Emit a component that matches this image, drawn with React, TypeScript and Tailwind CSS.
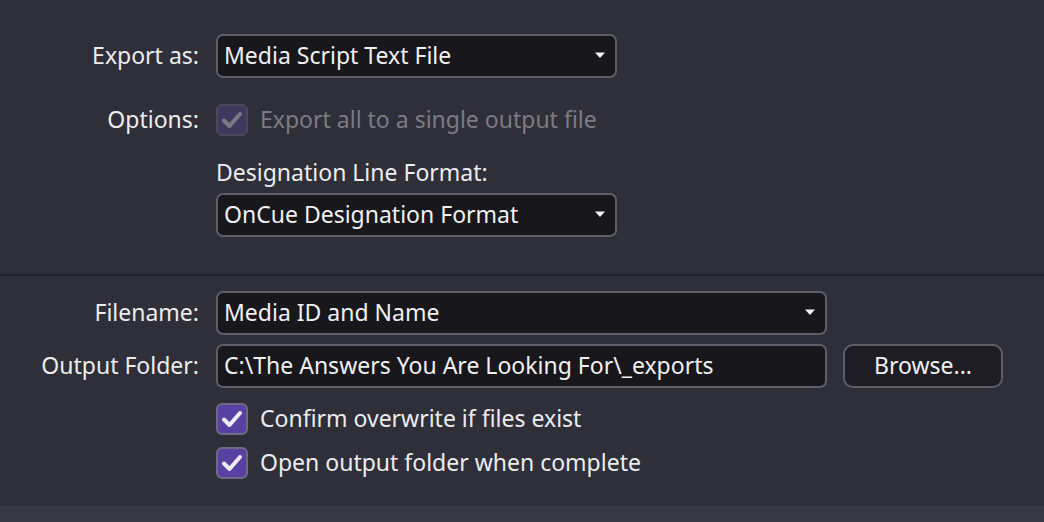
import React from "react";

const font = { fontFamily: '"Noto Sans", "Open Sans", sans-serif' };

function Caret() {
  return (
    <svg width="12" height="8" viewBox="0 0 12 8" className="shrink-0">
      <path d="M1 1.5 L11 1.5 L6 7 Z" fill="#f2f2f5" />
    </svg>
  );
}

function Select({ value, width }: { value: string; width: string }) {
  return (
    <div
      className={`flex h-[44px] items-center justify-between rounded-[7px] border-2 border-[#5e5d69] bg-[#18171c] pb-[3px] pl-[6px] pr-[9px] ${width}`}
    >
      <span className="text-[#f0f0f3]">{value}</span>
      <Caret />
    </div>
  );
}

function Check({ disabled }: { disabled?: boolean }) {
  return (
    <div
      className={
        disabled
          ? "flex h-[32px] w-[32px] shrink-0 items-center justify-center rounded-[6px] border-2 border-[#4a4859] bg-[#40395f]"
          : "flex h-[32px] w-[32px] shrink-0 items-center justify-center rounded-[6px] border-2 border-[#6d6a84] bg-[#5a40a2]"
      }
    >
      <svg width="22" height="20" viewBox="0 0 22 20">
        <path
          d="M3 10.5 L8.5 16 L19 4"
          fill="none"
          stroke={disabled ? "#7b7a85" : "#ececf2"}
          strokeWidth="4"
          strokeLinecap="round"
          strokeLinejoin="round"
        />
      </svg>
    </div>
  );
}

export default function App() {
  return (
    <div
      style={font}
      className="flex h-[522px] w-[1044px] flex-col bg-[#2f2f39] text-[23px] leading-[30px] text-[#ececef]"
    >
      {/* export settings */}
      <div className="grid h-[274px] grid-cols-[199px_1fr] content-start gap-x-[17px] pt-[34px]">
        <div className="flex h-[44px] items-center justify-end pb-[3px]">Export as:</div>
        <Select value="Media Script Text File" width="w-[401px]" />

        <div className="mt-[26px] flex h-[32px] items-center justify-end pb-[3px]">Options:</div>
        <div className="mt-[26px] flex h-[32px] items-center gap-[12px]">
          <Check disabled />
          <span className="pb-[3px] text-[#7c7b85]">Export all to a single output file</span>
        </div>

        <div />
        <div className="mt-[22px] flex h-[30px] items-center pb-[3px]">Designation Line Format:</div>

        <div />
        <div className="mt-[5px]">
          <Select value="OnCue Designation Format" width="w-[401px]" />
        </div>
      </div>

      <div className="h-[2px] bg-[#212127]" />

      {/* output */}
      <div className="grid h-[230px] grid-cols-[199px_1fr] content-start gap-x-[17px] pt-[15px]">
        <div className="flex h-[44px] items-center justify-end pb-[3px]">Filename:</div>
        <Select value="Media ID and Name" width="w-[611px]" />

        <div className="mt-[9px] flex h-[44px] items-center justify-end pb-[3px]">Output Folder:</div>
        <div className="mt-[9px] flex items-center gap-[16px]">
          <div className="flex h-[44px] w-[611px] items-center rounded-[7px] border-2 border-[#5e5d69] bg-[#18171c] pb-[3px] pl-[6px]">
            <span className="text-[#f0f0f3]">C:\The Answers You Are Looking For\_exports</span>
          </div>
          <button className="flex h-[44px] w-[160px] items-center justify-center rounded-[10px] border-2 border-[#5e5d69] bg-[#1e1d23] pb-[3px] text-[#f0f0f3]">
            Browse...
          </button>
        </div>

        <div />
        <div className="mt-[15px] flex h-[32px] items-center gap-[12px]">
          <Check />
          <span className="pb-[3px]">Confirm overwrite if files exist</span>
        </div>

        <div />
        <div className="mt-[12px] flex h-[32px] items-center gap-[12px]">
          <Check />
          <span className="pb-[3px]">Open output folder when complete</span>
        </div>
      </div>

      <div className="flex-1 bg-[#393943]" />
    </div>
  );
}
